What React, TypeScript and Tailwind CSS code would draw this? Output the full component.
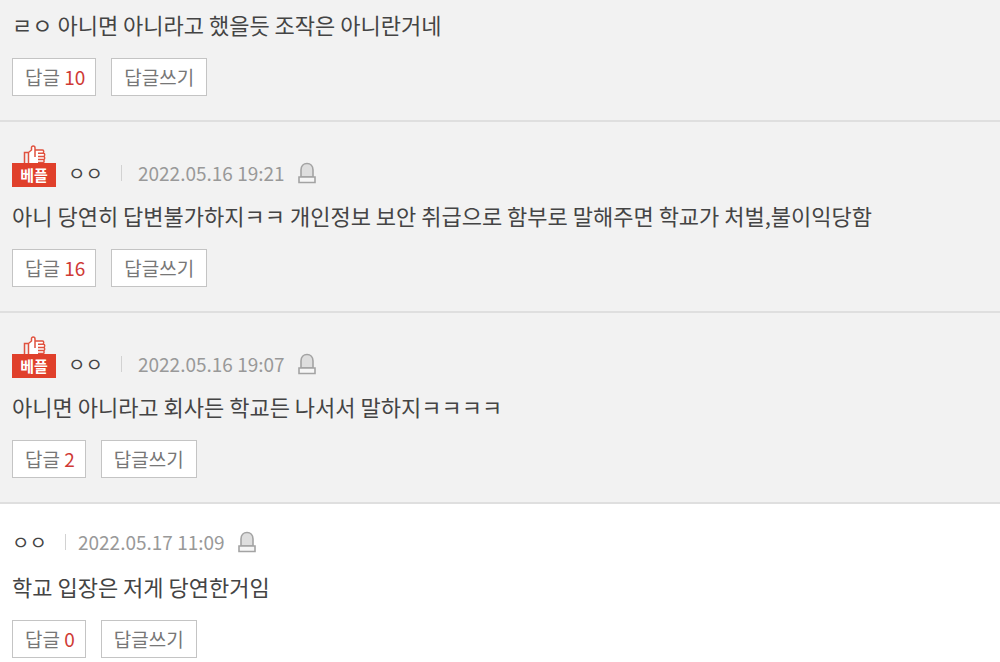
type Comment = {
  id: number;
  best: boolean;
  author?: string;
  date?: string;
  text: string;
  replies: number;
};

const comments: Comment[] = [
  { id: 1, best: true, text: "ㄹㅇ 아니면 아니라고 했을듯 조작은 아니란거네", replies: 10 },
  {
    id: 2,
    best: true,
    author: "ㅇㅇ",
    date: "2022.05.16 19:21",
    text: "아니 당연히 답변불가하지ㅋㅋ 개인정보 보안 취급으로 함부로 말해주면 학교가 처벌,불이익당함",
    replies: 16,
  },
  {
    id: 3,
    best: true,
    author: "ㅇㅇ",
    date: "2022.05.16 19:07",
    text: "아니면 아니라고 회사든 학교든 나서서 말하지ㅋㅋㅋㅋ",
    replies: 2,
  },
  {
    id: 4,
    best: false,
    author: "ㅇㅇ",
    date: "2022.05.17 11:09",
    text: "학교 입장은 저게 당연한거임",
    replies: 0,
  },
];

function BestBadge() {
  return (
    <span className="mr-3 flex w-11 flex-col items-center">
      <svg width="24" height="18" viewBox="0 0 24 18" fill="none" aria-hidden="true">
        <path d="M7 7l3-2V2h3v3h8l2 3v10H7z" fill="#fff" />
        <path
          d="M2.500 18V7.500h4V18M6.500 7.500l3-2.500V2.800C9.500 1.600 10.200 1 11.200 1s1.800.7 1.800 1.900V12M13 5h7.500c1.600 0 1.600 3.200 0 3.200H16M16 8.200h5.500c1.600 0 1.600 3.200 0 3.200H16M16 11.400h5.500c1.600 0 1.600 3.200 0 3.200H16M16 14.600h5c1.500 0 1.500 3 0 3h-5"
          stroke="#e0523f"
          strokeWidth="1.5"
        />
      </svg>
      <span className="flex h-6 w-full items-center justify-center bg-[#e0402b] text-[15px] leading-6 font-bold text-white">
        베플
      </span>
    </span>
  );
}

function ReportButton() {
  return (
    <button type="button" aria-label="신고" className="ml-3">
      <svg width="20" height="22" viewBox="0 0 20 22" fill="none" aria-hidden="true">
        <path d="M4 15V8c0-4 2.500-6.500 6-6.500S16 4 16 8v7z" fill="#dedede" stroke="#a3a3a3" strokeWidth="1.6" />
        <path d="M2 15h16v5.500H2z" fill="#f6f6f6" stroke="#a3a3a3" strokeWidth="1.600" />
      </svg>
    </button>
  );
}

function CommentItem({ comment }: { comment: Comment }) {
  const { best, author, date, text, replies } = comment;

  return (
    <li className={best ? "border-b-2 border-[#dfdfdf] bg-[#f2f2f2] px-3 pb-6" : "px-3 pt-6 pb-1"}>
      {author && (
        <div className={best ? "mb-1 flex h-[65px] items-end" : "mb-1.5 flex h-7 items-center"}>
          {best && <BestBadge />}
          <div className="flex h-7 items-center text-[19px] leading-7">
            <span className="text-[#444]">{author}</span>
            <span className={best ? "ml-[18px] mr-4 h-4 w-px bg-[#d2d2d2]" : "ml-[18px] mr-3 h-4 w-px bg-[#d2d2d2]"} />
            <time className="text-[#999]">{date}</time>
            <ReportButton />
          </div>
        </div>
      )}
      <p className="pt-2 text-[22px] leading-8 text-[#444]">{text}</p>
      <div className="mt-[18px] flex gap-[15px] text-[19px] leading-9 text-[#777]">
        <button type="button" className="border border-[#c4c4c4] bg-white pr-2.5 pl-3">
          답글 <span className="text-[#cf3a35]">{replies}</span>
        </button>
        <button type="button" className="border border-[#c4c4c4] bg-white px-3">
          답글쓰기
        </button>
      </div>
    </li>
  );
}

export default function App() {
  return (
    <main className="min-h-screen bg-white font-['Noto_Sans_CJK_KR',sans-serif]">
      <ul>
        {comments.map((comment) => (
          <CommentItem key={comment.id} comment={comment} />
        ))}
      </ul>
    </main>
  );
}
